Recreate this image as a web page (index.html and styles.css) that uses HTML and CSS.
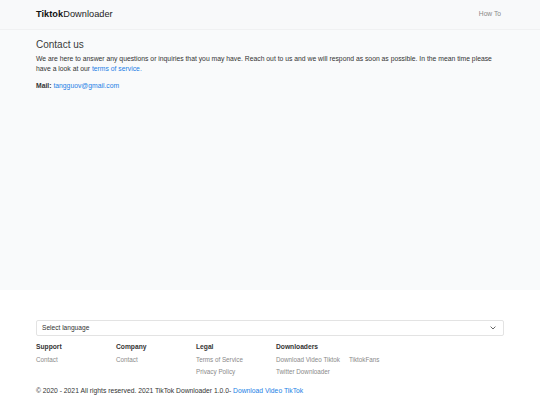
FILE: index.html
```html
<!DOCTYPE html>
<html lang="en">
<head>
<meta charset="utf-8">
<title>Contact us - TiktokDownloader</title>
<link rel="stylesheet" href="styles.css">
</head>
<body>
<header class="navbar">
  <a class="brand" href="#"><b>Tiktok</b>Downloader</a>
  <a class="nav-link" href="#">How To</a>
</header>
<main class="content">
  <div class="container">
    <h1 class="title">Contact us</h1>
    <p class="lead">We are here to answer any questions or inquiries that you may have. Reach out to us and we will respond as soon as possible. In the mean time please have a look at our <a href="#">terms of service.</a></p>
    <p class="mail"><b>Mail:</b> <a href="#">tangguov@gmail.com</a></p>
  </div>
</main>
<footer class="footer">
  <div class="container">
    <div class="select">
      <span>Select language</span>
      <svg class="chev" width="6" height="4" viewBox="0 0 6 4"><path d="M0.6 0.6 L3 3 L5.4 0.6" fill="none" stroke="#555" stroke-width="0.9"/></svg>
    </div>
    <div class="cols">
      <div class="col">
        <h4>Support</h4>
        <a href="#">Contact</a>
      </div>
      <div class="col">
        <h4>Company</h4>
        <a href="#">Contact</a>
      </div>
      <div class="col">
        <h4>Legal</h4>
        <a href="#">Terms of Service</a>
        <a href="#">Privacy Policy</a>
      </div>
      <div class="col wide">
        <h4>Downloaders</h4>
        <div class="pair">
          <a href="#">Download Video Tiktok</a>
          <a href="#">TiktokFans</a>
        </div>
        <a href="#">Twitter Downloader</a>
      </div>
    </div>
    <p class="copy">© 2020 - 2021 All rights reserved. 2021 TikTok Downloader 1.0.0- <a href="#">Download Video TikTok</a></p>
  </div>
</footer>
</body>
</html>
```
FILE: styles.css
```css
* { box-sizing: border-box; }
html, body { margin: 0; padding: 0; }
body {
  font-family: "Liberation Sans", Arial, sans-serif;
  color: #333;
  background: #fff;
  font-size: 6.8px;
  line-height: 10px;
}
a { text-decoration: none; }
.container { width: 468px; margin: 0 auto; }

.navbar {
  height: 30px;
  padding: 0 39px 1px 36px;
  display: flex;
  justify-content: space-between;
  align-items: center;
  background: #f8f9fa;
  border-bottom: 1px solid #f0f1f2;
}
.brand { color: #222; font-size: 9.2px; letter-spacing: 0.05px; }
.brand b { font-weight: 700; color: #111; }
.nav-link { color: #888; font-size: 6.7px; }

.content {
  background: #f9fafb;
  height: 260px;
  padding-top: 9px;
}
.title {
  margin: 0 0 3px;
  font-size: 10px;
  line-height: 12px;
  font-weight: 400;
  color: #3a3a3a;
}
.lead { margin: 0; line-height: 10px; }
.lead a, .mail a, .copy a { color: #1c7fe6; }
.mail { margin: 7px 0 0; }
.mail b { font-weight: 700; }

.footer { padding-top: 30px; }
.select {
  height: 16px;
  border: 1px solid #e3e3e3;
  border-radius: 2px;
  display: flex;
  align-items: center;
  justify-content: space-between;
  padding: 0 7px 0 5px;
  color: #333;
  font-size: 6.6px;
}
.cols { display: flex; margin-top: 6px; }
.col { width: 80px; display: flex; flex-direction: column; }
.col.wide { width: 200px; }
.col h4 {
  margin: 0 0 2px;
  font-size: 6.7px;
  line-height: 10px;
  font-weight: 700;
  color: #333;
}
.col a { color: #8a8a8a; line-height: 12px; font-size: 6.3px; }
.pair { display: flex; gap: 9px; }
.copy { margin: 8px 0 0; color: #333; font-size: 6.75px; }
```
